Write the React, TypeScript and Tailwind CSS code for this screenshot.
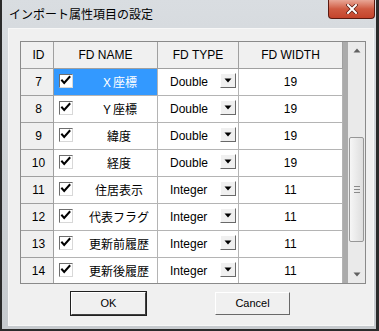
import React from "react";

type Row = { id: number; name: string; type: string; width: number; selected?: boolean };

const rows: Row[] = [
  { id: 7, name: "Ｘ座標", type: "Double", width: 19, selected: true },
  { id: 8, name: "Ｙ座標", type: "Double", width: 19 },
  { id: 9, name: "緯度", type: "Double", width: 19 },
  { id: 10, name: "経度", type: "Double", width: 19 },
  { id: 11, name: "住居表示", type: "Integer", width: 11 },
  { id: 12, name: "代表フラグ", type: "Integer", width: 11 },
  { id: 13, name: "更新前履歴", type: "Integer", width: 11 },
  { id: 14, name: "更新後履歴", type: "Integer", width: 11 },
];

function CheckBox() {
  return (
    <div className="w-[14px] h-[14px] shrink-0 bg-white border-t border-l border-[#6e6e6e] border-r-[#d8d8d8] border-b-[#d8d8d8] border-r border-b flex items-start justify-start">
      <svg width="12" height="12" viewBox="0 0 12 12">
        <path d="M2 5.5 L4.2 8 L9.5 2" fill="none" stroke="#000" strokeWidth="2" strokeLinecap="square" />
      </svg>
    </div>
  );
}

function DropButton() {
  return (
    <div className="w-[16px] h-[15px] shrink-0 bg-[#f0f0f0] border border-t-white border-l-white border-r-[#696969] border-b-[#696969] flex items-center justify-center">
      <svg width="8" height="5" viewBox="0 0 8 5">
        <polygon points="0.5,0.5 7.5,0.5 4,4.5" fill="#000" />
      </svg>
    </div>
  );
}

function Arrow({ up }: { up?: boolean }) {
  return (
    <div className="h-[17px] flex items-center justify-center">
      <svg width="8" height="5" viewBox="0 0 8 5">
        {up ? (
          <polygon points="0.5,4.5 7.5,4.5 4,0.5" fill="#606060" />
        ) : (
          <polygon points="0.5,0.5 7.5,0.5 4,4.5" fill="#606060" />
        )}
      </svg>
    </div>
  );
}

export default function App() {
  const font = "font-['Liberation_Sans','Noto_Sans_CJK_JP',sans-serif]";
  return (
    <div className={`w-[379px] h-[331px] bg-[#2b2b2b] pl-[2px] pr-[3px] pb-[2px] flex flex-col overflow-hidden ${font}`}>
      <div className="flex-1 flex flex-col bg-gradient-to-b from-[#d9dde1] via-[#cdd1d5] to-[#c6cace] pl-[6px] pr-[2px] pb-[3px]">
        {/* Title bar */}
        <div className="h-[28px] flex items-start -ml-[6px] -mr-[2px]">
          <div className="pl-[7px] pt-[5px] text-[12px] leading-[18px] text-black font-['Noto_Sans_CJK_JP',sans-serif]">
            インポート属性項目の設定
          </div>
          <div className="ml-auto mr-[1px] w-[47px] h-[19px] rounded-b-[4px] border border-t-0 border-[#5a1a10] bg-gradient-to-b from-[#e8a696] via-[#cf5a41] to-[#c4432b] flex items-center justify-center">
            <svg width="12" height="10" viewBox="0 0 12 10">
              <path d="M2 1 L10 9 M10 1 L2 9" stroke="#5a1a10" strokeWidth="3.4" strokeLinecap="square" />
              <path d="M2 1 L10 9 M10 1 L2 9" stroke="#ffffff" strokeWidth="2" strokeLinecap="square" />
            </svg>
          </div>
        </div>
        {/* Client area */}
        <div className="flex-1 bg-[#f0f0f0] border border-[#f7f7f7] pl-[11px] pt-[12px] flex flex-col">
          {/* Grid */}
          <div className="w-[346px] h-[243px] border border-[#8a8a8a] flex overflow-hidden">
            <div className="w-[322px] flex flex-col overflow-hidden">
              {/* Header */}
              <div className="flex h-[27px] shrink-0 text-[12px] text-black">
                <div className="w-[33px] bg-[#f0f0f0] border-r border-b border-[#a0a0a0] flex items-center justify-center pl-[3px]">ID</div>
                <div className="w-[104px] bg-[#f0f0f0] border-r border-b border-[#a0a0a0] flex items-center justify-center">FD NAME</div>
                <div className="w-[81px] bg-[#f0f0f0] border-r border-b border-[#a0a0a0] flex items-center justify-center">FD TYPE</div>
                <div className="w-[104px] bg-[#f0f0f0] border-r border-b border-[#a0a0a0] flex items-center justify-center">FD WIDTH</div>
              </div>
              {rows.map((r) => (
                <div key={r.id} className="flex h-[27px] shrink-0 text-[12px] text-black">
                  <div className="w-[33px] bg-[#f0f0f0] border-r border-b border-[#a0a0a0] flex items-center justify-center pl-[3px]">{r.id}</div>
                  <div className={`w-[104px] border-r border-b border-[#b4b4b4] flex items-start pl-[5px] ${r.selected ? "bg-[#3399ff] text-white" : "bg-white"}`}>
                    <div className="mt-[5px]"><CheckBox /></div>
                    <div className="flex-1 self-stretch flex items-center justify-center pl-[8px] font-['Noto_Sans_CJK_JP',sans-serif] leading-none">{r.name}</div>
                  </div>
                  <div className="w-[81px] bg-white border-r border-b border-[#b4b4b4] flex items-start pl-[12px] pr-[2px]">
                    <div className="flex-1 self-stretch flex items-center">{r.type}</div>
                    <div className="mt-[4px]"><DropButton /></div>
                  </div>
                  <div className="w-[104px] bg-white border-r border-b border-[#b4b4b4] flex items-center justify-center">{r.width}</div>
                </div>
              ))}
            </div>
            <div className="w-[5px] bg-[#ababab]" />
            {/* Scrollbar */}
            <div className="w-[17px] bg-[#eaeaea] flex flex-col">
              <Arrow up />
              <div className="h-[78px]" />
              <div className="mx-[1px] h-[105px] rounded-[2px] border border-[#979797] bg-gradient-to-r from-[#f6f6f6] to-[#dedede] flex flex-col items-center justify-center gap-[2px]">
                <div className="w-[6px] h-[1px] bg-[#8a8a8a]" />
                <div className="w-[6px] h-[1px] bg-[#8a8a8a]" />
                <div className="w-[6px] h-[1px] bg-[#8a8a8a]" />
              </div>
              <div className="flex-1" />
              <Arrow />
            </div>
          </div>
          {/* Buttons */}
          <div className="mt-[8px] ml-[51px] flex gap-[69px] text-[11px] text-black">
            <div className="w-[75px] h-[23px] bg-[#f0f0f0] border border-t-white border-l-white border-r-[#404040] border-b-[#404040] outline outline-1 outline-[#202020] -outline-offset-0 flex items-center justify-center">OK</div>
            <div className="w-[75px] h-[23px] bg-[#f0f0f0] border border-t-white border-l-white border-r-[#696969] border-b-[#696969] flex items-center justify-center">Cancel</div>
          </div>
        </div>
      </div>
    </div>
  );
}
